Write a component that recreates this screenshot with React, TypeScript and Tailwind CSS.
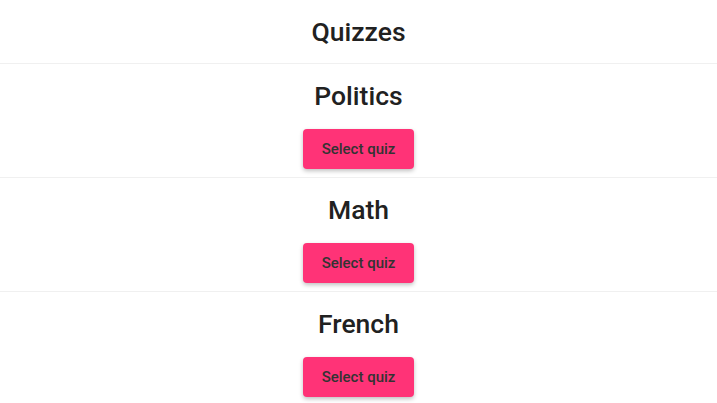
const quizzes = ["Politics", "Math", "French"];

const App = () => {
  return (
    <div className="min-h-screen bg-white font-['Roboto',sans-serif] text-[#212121]">
      <div className="flex h-[64px] items-center justify-center border-b border-[#f0f0f0]">
        <h1 className="text-[26.5px] font-medium leading-8">Quizzes</h1>
      </div>

      {quizzes.map((name) => (
        <div
          key={name}
          className="flex flex-col items-center border-b border-[#f0f0f0] pt-4 pb-2"
        >
          <h2 className="text-[26.5px] font-medium leading-8">{name}</h2>
          <button className="mt-[17px] h-10 w-[111px] rounded bg-[#ff3377] text-[15px] font-medium text-[#333] shadow-[0_2px_4px_rgba(0,0,0,0.25)]">
            Select quiz
          </button>
        </div>
      ))}
    </div>
  );
};

export default App;
